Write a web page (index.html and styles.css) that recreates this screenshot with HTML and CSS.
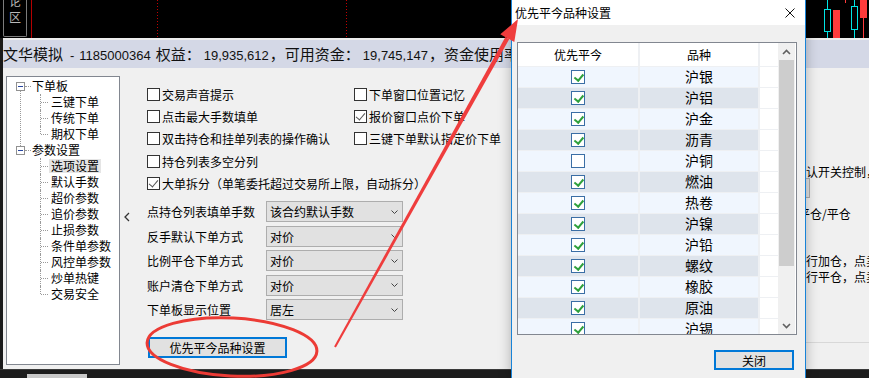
FILE: index.html
```html
<!DOCTYPE html>
<html lang="zh-CN">
<head>
<meta charset="utf-8">
<title>优先平今品种设置</title>
<link rel="stylesheet" href="styles.css">
</head>
<body>
<div class="screen">
  <div class="chart">
    <div class="side-tab"><span class="st1">论</span><span class="st2">区</span></div>
    <svg class="chart-canvas" width="869" height="38" viewBox="0 0 869 38">
      <line x1="31.5" y1="0" x2="31.5" y2="38" stroke="#b40000" stroke-width="1"/>
      <line x1="157.5" y1="0" x2="157.5" y2="38" stroke="#c00000" stroke-width="1" stroke-dasharray="1 2"/>
      <line x1="346.5" y1="0" x2="346.5" y2="38" stroke="#c00000" stroke-width="1" stroke-dasharray="1 2"/>
      <line x1="827.5" y1="0" x2="827.5" y2="38" stroke="#00e5e5"/>
      <rect x="824.5" y="9.5" width="6" height="22" fill="#000" stroke="#00e5e5"/>
      <rect x="833" y="10" width="7" height="28" fill="#ff3b3b"/>
      <rect x="845" y="0" width="1" height="3" fill="#ff3b3b"/>
      <line x1="854.5" y1="0" x2="854.5" y2="38" stroke="#00e5e5"/>
      <rect x="851.5" y="6.5" width="6" height="23" fill="#000" stroke="#00e5e5"/>
      <line x1="863.5" y1="0" x2="863.5" y2="38" stroke="#ff3b3b"/>
      <rect x="860" y="0" width="7" height="18" fill="#ff3b3b"/>
    </svg>
  </div>

  <div class="mainwin">
    <div class="titlebar">文华模拟<span class="num dash">-</span><span class="num">1185000364</span><span class="gap">权益：</span><span class="num val">19,935,612</span>，可用资金：<span class="num val">19,745,147</span>，资金使用率</div>
    <div class="body">
      <div class="tree">
        <div class="node parent"><span class="toggle"></span><span class="hdash"></span><span class="label">下单板</span></div>
        <div class="children cont">
          <div class="node child"><span class="label">三键下单</span></div>
          <div class="node child"><span class="label">传统下单</span></div>
          <div class="node child"><span class="label">期权下单</span></div>
        </div>
        <div class="node parent"><span class="toggle"></span><span class="hdash"></span><span class="label">参数设置</span></div>
        <div class="children">
          <div class="node child"><span class="label sel">选项设置</span></div>
          <div class="node child"><span class="label">默认手数</span></div>
          <div class="node child"><span class="label">超价参数</span></div>
          <div class="node child"><span class="label">追价参数</span></div>
          <div class="node child"><span class="label">止损参数</span></div>
          <div class="node child"><span class="label">条件单参数</span></div>
          <div class="node child"><span class="label">风控单参数</span></div>
          <div class="node child"><span class="label">炒单热键</span></div>
          <div class="node child"><span class="label">交易安全</span></div>
        </div>
      </div>

      <div class="collapse">
        <svg width="8" height="10" viewBox="0 0 8 10"><polyline points="6,1 2,5 6,9" fill="none" stroke="#333" stroke-width="1.3"/></svg>
      </div>

      <div class="options">
        <div class="checks">
          <div class="chk"><span class="box"></span>交易声音提示</div>
          <div class="chk"><span class="box"></span>下单窗口位置记忆</div>
          <div class="chk"><span class="box"></span>点击最大手数填单</div>
          <div class="chk"><span class="box on"></span>报价窗口点价下单</div>
          <div class="chk"><span class="box"></span>双击持仓和挂单列表的操作确认</div>
          <div class="chk"><span class="box"></span>三键下单默认指定价下单</div>
          <div class="chk wide"><span class="box"></span>持仓列表多空分列</div>
          <div class="chk wide"><span class="box on"></span>大单拆分（单笔委托超过交易所上限，自动拆分）</div>
        </div>
        <div class="selects">
          <div class="slabel">点持仓列表填单手数</div>
          <div class="select"><span>该合约默认手数</span><svg width="7" height="4" viewBox="0 0 7 4"><polyline points="0.5,0.5 3.5,3.5 6.5,0.5" fill="none" stroke="#444" stroke-width="1"/></svg></div>
          <div class="slabel">反手默认下单方式</div>
          <div class="select"><span>对价</span><svg width="7" height="4" viewBox="0 0 7 4"><polyline points="0.5,0.5 3.5,3.5 6.5,0.5" fill="none" stroke="#444" stroke-width="1"/></svg></div>
          <div class="slabel">比例平仓下单方式</div>
          <div class="select"><span>对价</span><svg width="7" height="4" viewBox="0 0 7 4"><polyline points="0.5,0.5 3.5,3.5 6.5,0.5" fill="none" stroke="#444" stroke-width="1"/></svg></div>
          <div class="slabel">账户清仓下单方式</div>
          <div class="select"><span>对价</span><svg width="7" height="4" viewBox="0 0 7 4"><polyline points="0.5,0.5 3.5,3.5 6.5,0.5" fill="none" stroke="#444" stroke-width="1"/></svg></div>
          <div class="slabel">下单板显示位置</div>
          <div class="select"><span>居左</span><svg width="7" height="4" viewBox="0 0 7 4"><polyline points="0.5,0.5 3.5,3.5 6.5,0.5" fill="none" stroke="#444" stroke-width="1"/></svg></div>
        </div>
        <div class="pbtn">优先平今品种设置</div>
      </div>

      <div class="extra">
        <div class="l1">默认开关控制，</div>
        <div class="frag-select"></div>
        <div class="l3">平仓/平仓</div>
        <div class="l4">行加仓，点卖</div>
        <div class="l5">行平仓，点卖</div>
        <div class="rule"></div>
      </div>
    </div>
  </div>

  <div class="taskbar"><div class="task-tab"></div></div>

  <div class="dialog">
    <div class="dlg-title">
      <span>优先平今品种设置</span>
      <svg width="10" height="10" viewBox="0 0 10 10"><path d="M0.5 0.5 L9.5 9.5 M9.5 0.5 L0.5 9.5" stroke="#111" stroke-width="1"/></svg>
    </div>
    <div class="grid">
      <div class="table">
        <div class="hd">优先平今</div><div class="hd">品种</div><div class="hd"></div>
        <div class="row a"><div class="cell"><span class="gbox on"></span></div><div class="cell name">沪银</div><div class="cell blank"></div></div>
        <div class="row b"><div class="cell"><span class="gbox on"></span></div><div class="cell name">沪铝</div><div class="cell blank"></div></div>
        <div class="row a"><div class="cell"><span class="gbox on"></span></div><div class="cell name">沪金</div><div class="cell blank"></div></div>
        <div class="row b"><div class="cell"><span class="gbox on"></span></div><div class="cell name">沥青</div><div class="cell blank"></div></div>
        <div class="row a"><div class="cell"><span class="gbox"></span></div><div class="cell name">沪铜</div><div class="cell blank"></div></div>
        <div class="row b"><div class="cell"><span class="gbox on"></span></div><div class="cell name">燃油</div><div class="cell blank"></div></div>
        <div class="row a"><div class="cell"><span class="gbox on"></span></div><div class="cell name">热卷</div><div class="cell blank"></div></div>
        <div class="row b"><div class="cell"><span class="gbox on"></span></div><div class="cell name">沪镍</div><div class="cell blank"></div></div>
        <div class="row a"><div class="cell"><span class="gbox on"></span></div><div class="cell name">沪铅</div><div class="cell blank"></div></div>
        <div class="row b"><div class="cell"><span class="gbox on"></span></div><div class="cell name">螺纹</div><div class="cell blank"></div></div>
        <div class="row a"><div class="cell"><span class="gbox on"></span></div><div class="cell name">橡胶</div><div class="cell blank"></div></div>
        <div class="row b"><div class="cell"><span class="gbox on"></span></div><div class="cell name">原油</div><div class="cell blank"></div></div>
        <div class="row a"><div class="cell"><span class="gbox on"></span></div><div class="cell name">沪锡</div><div class="cell blank"></div></div>
      </div>
      <div class="scroll">
        <div class="sb-btn"><svg width="9" height="6" viewBox="0 0 9 6"><polyline points="1,5 4.5,1.5 8,5" fill="none" stroke="#606060" stroke-width="1.6"/></svg></div>
        <div class="thumb"></div>
        <div class="sb-space"></div>
        <div class="sb-btn"><svg width="9" height="6" viewBox="0 0 9 6"><polyline points="1,1 4.5,4.5 8,1" fill="none" stroke="#606060" stroke-width="1.6"/></svg></div>
      </div>
    </div>
    <div class="close-btn">关闭</div>
  </div>

  <svg class="annot" width="869" height="378" viewBox="0 0 869 378">
    <ellipse cx="232" cy="347" rx="85" ry="29" fill="none" stroke="#ec3b35" stroke-width="3" transform="rotate(3 232 347)"/>
    <polygon points="334.1,346.5 505.4,37.1 509.2,39.3 335.9,347.5" fill="#ef3d3d"/>
    <polygon points="518,19 514.3,42.1 500.3,34.3" fill="#ef3d3d"/>
  </svg>
</div>
</body>
</html>
```

FILE: styles.css
```css
* { box-sizing: border-box; }
html, body { margin: 0; padding: 0; }
body {
  background: #000;
  font-family: "Noto Sans CJK SC", "Noto Sans", sans-serif;
  font-size: 12px;
  color: #000;
}
.screen {
  position: relative;
  width: 869px;
  height: 378px;
  overflow: hidden;
  background: #1a1a1a;
}

/* top chart strip */
.chart {
  position: relative;
  height: 38px;
  background: #000;
}
.side-tab {
  margin-left: 3px;
  width: 24px;
  height: 37px;
  border-left: 1px solid #7c7c7c;
  border-right: 1px solid #7c7c7c;
  border-bottom: 1px solid #7c7c7c;
  border-radius: 0 0 2px 2px;
  display: flex;
  flex-direction: column;
  align-items: center;
  color: #b8b8b8;
  line-height: 14px;
  overflow: hidden;
}
.st1 { margin-top: -6px; height: 14px; }
.st2 { margin-top: 2px; height: 14px; }
.chart-canvas { position: absolute; left: 0; top: 0; }

/* main window */
.mainwin {
  margin-left: 3px;
  height: 331px;
  border-top: 2px solid #ececec;
  display: flex;
  flex-direction: column;
  background: #f0f0f0;
}
.titlebar {
  height: 28px;
  flex: none;
  background: #d4d8e6;
  line-height: 28px;
  font-size: 15px;
  white-space: nowrap;
  overflow: hidden;
  color: #111;
}
.num { font-family: "Liberation Sans", sans-serif; font-size: 13px; }
.dash { margin: 0 5px 0 7px; }
.gap { margin-left: 5px; }
.val { margin: 0 1px 0 3px; }

.body {
  flex: 1;
  min-height: 0;
  display: flex;
  align-items: flex-start;
}

/* tree */
.tree {
  flex: none;
  margin: 8px 0 0 3px;
  width: 114px;
  height: 289px;
  background: #fff;
  border: 1px solid #828790;
  padding-top: 1px;
}
.node {
  height: 16px;
  display: flex;
  align-items: center;
  white-space: nowrap;
}
.parent { padding-left: 9px; }
.toggle {
  position: relative;
  flex: none;
  width: 9px;
  height: 9px;
  border: 1px solid #919191;
  background: #fff;
}
.toggle::after {
  content: "";
  position: absolute;
  left: 1px;
  top: 3px;
  width: 5px;
  height: 1px;
  background: #2846a0;
}
.hdash {
  flex: none;
  width: 6px;
  margin-right: 1px;
  border-top: 1px dotted #9a9a9a;
}
.label { line-height: 14px; }
.children { position: relative; }
.children.cont::before {
  content: "";
  position: absolute;
  left: 13px;
  top: -3px;
  bottom: -4px;
  border-left: 1px dotted #9a9a9a;
}
.child {
  position: relative;
  padding-left: 42px;
}
.child .label { padding: 0 2px; }
.child::before {
  content: "";
  position: absolute;
  left: 33px;
  top: 0;
  bottom: 0;
  border-left: 1px dotted #9a9a9a;
}
.child:last-child::before { bottom: 8px; }
.child::after {
  content: "";
  position: absolute;
  left: 34px;
  top: 8px;
  width: 7px;
  border-top: 1px dotted #9a9a9a;
}
.sel { background: #e5e5e5; }

.collapse {
  flex: none;
  width: 27px;
  align-self: stretch;
  display: flex;
  align-items: center;
  padding: 0 0 3px 3px;
}

/* options */
.options {
  flex: none;
  width: 270px;
  padding-top: 15px;
}
.checks {
  display: grid;
  grid-template-columns: 207px auto;
  grid-auto-rows: 22.3px;
}
.chk {
  display: flex;
  align-items: center;
  white-space: nowrap;
}
.wide { grid-column: 1 / span 2; }
.box {
  position: relative;
  flex: none;
  width: 13px;
  height: 13px;
  margin-right: 2px;
  border: 1px solid #333;
  background: #fff;
}
.box.on::after {
  content: "";
  position: absolute;
  left: 3px;
  top: 0px;
  width: 4px;
  height: 8px;
  border-right: 1.3px solid #555;
  border-bottom: 1.3px solid #555;
  transform: rotate(40deg);
}
.selects {
  margin-top: 6.6px;
  display: grid;
  grid-template-columns: 119px 137px;
  grid-auto-rows: 21px;
  row-gap: 3.5px;
  align-items: center;
}
.slabel { white-space: nowrap; }
.select {
  height: 21px;
  border: 1px solid #adadad;
  background: #e1e1e1;
  display: flex;
  align-items: center;
  justify-content: space-between;
  padding: 0 4px 0 3px;
}
.pbtn {
  margin: 17px 0 0 1px;
  width: 139px;
  height: 21px;
  border: 2px solid #0078d7;
  background: #e1e1e1;
  display: flex;
  align-items: center;
  justify-content: center;
}

/* content hidden behind the dialog */
.extra {
  flex: 1;
  min-width: 0;
  align-self: stretch;
  overflow: hidden;
  padding: 98px 0 0 377px;
  white-space: nowrap;
}
.l1 { line-height: 12px; }
.frag-select {
  width: 16px;
  height: 20px;
  border: 1px solid #adadad;
  background: #e1e1e1;
}
.l3 { margin: 8px 0 0 4px; line-height: 16px; }
.l4 { margin: 31px 0 0 12px; line-height: 16px; }
.l5 { margin-left: 12px; line-height: 16px; }
.rule { margin-top: 57px; border-top: 1px solid #d8d8d8; }

.taskbar {
  height: 9px;
  background: #1c1c1c;
  border-top: 1px solid #3a3a3a;
  padding: 4px 0 0 27px;
}
.task-tab { width: 60px; height: 4px; background: #c8c8c8; }

/* dialog */
.dialog {
  position: absolute;
  left: 511px;
  top: 0;
  width: 295px;
  height: 378px;
  background: #f0f0f0;
  border-left: 1px solid #1883d7;
  border-right: 1px solid #1883d7;
  box-shadow: 0 0 12px rgba(0, 0, 0, 0.28);
  display: flex;
  flex-direction: column;
}
.dlg-title {
  flex: none;
  height: 25px;
  background: #fff;
  display: flex;
  align-items: center;
  justify-content: space-between;
  padding: 0 10px 0 3px;
}
.grid {
  flex: none;
  margin: 17px 0 0 5px;
  width: 280px;
  height: 293px;
  border: 1px solid #828790;
  background: #fff;
  display: flex;
}
.table {
  width: 260px;
  height: 291px;
  overflow: hidden;
  background: #eef0f3;
  display: grid;
  grid-template-columns: 120px 118px 18px;
  grid-template-rows: 23px;
  grid-auto-rows: 20px;
  column-gap: 2px;
  row-gap: 1px;
  align-content: start;
}
.hd {
  background: #fff;
  display: flex;
  align-items: center;
  justify-content: center;
}
.row { display: contents; }
.cell {
  display: flex;
  align-items: center;
  justify-content: center;
}
.row.a .cell { background: #f0f6fe; }
.row.b .cell { background: #dee4ec; }
.row .cell.blank { background: #fff; }
.name { font-size: 14px; line-height: 18px; padding-bottom: 2px; }
.gbox {
  position: relative;
  width: 14px;
  height: 14px;
  border: 1.5px solid #3a6ea5;
  background: #fff;
}
.gbox.on::after {
  content: "";
  position: absolute;
  left: 3.5px;
  top: 1px;
  width: 3.5px;
  height: 7px;
  border-right: 2px solid #2ea03c;
  border-bottom: 2px solid #2ea03c;
  transform: rotate(40deg);
}
.scroll {
  flex: none;
  width: 17px;
  height: 291px;
  background: #f0f0f0;
  display: flex;
  flex-direction: column;
  align-items: center;
}
.sb-btn {
  flex: none;
  width: 100%;
  height: 17px;
  display: flex;
  align-items: center;
  justify-content: center;
}
.thumb { flex: none; width: 15px; height: 206px; background: #cdcdcd; }
.sb-space { flex: 1; }
.close-btn {
  flex: none;
  margin: 15px 11px 0 auto;
  width: 80px;
  height: 20px;
  border: 2px solid #0078d7;
  background: #e1e1e1;
  display: flex;
  align-items: center;
  justify-content: center;
}

.annot {
  position: absolute;
  left: 0;
  top: 0;
  pointer-events: none;
}
```
